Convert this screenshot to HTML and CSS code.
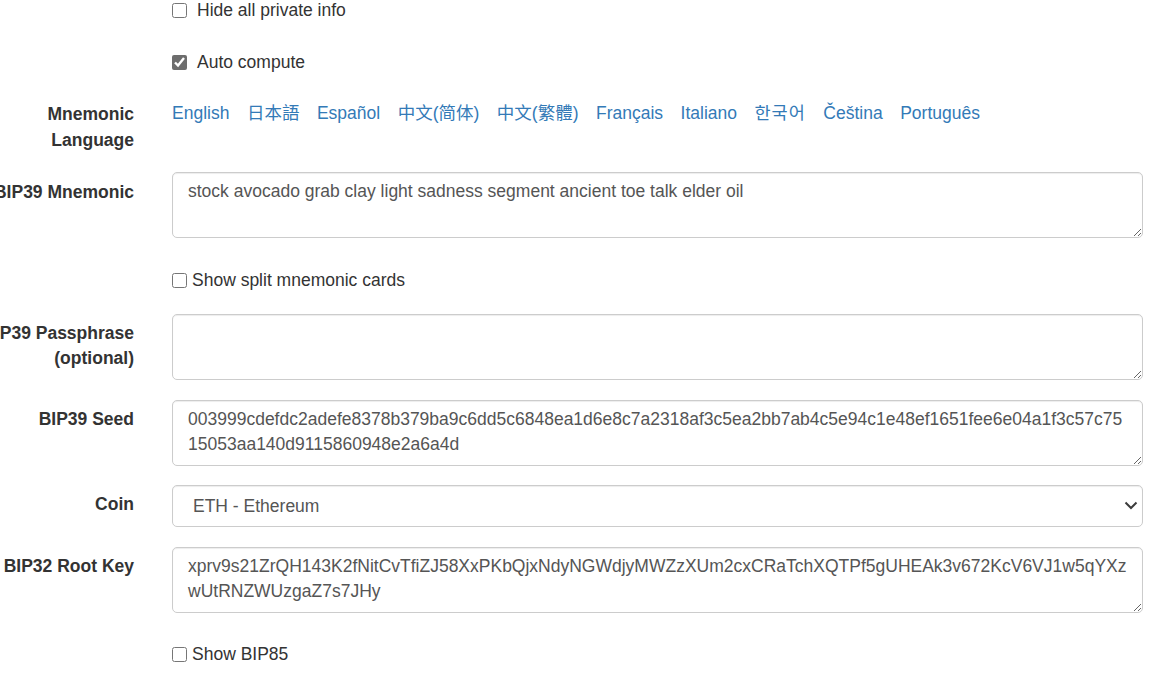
FILE: index.html
```html
<!DOCTYPE html>
<html lang="en">
<head>
<meta charset="utf-8">
<title>BIP39</title>
<link rel="stylesheet" href="styles.css">
</head>
<body>
<form class="form">
  <div class="row row-hide">
    <div class="label"></div>
    <div class="control">
      <label class="check check-wide"><input type="checkbox" class="cb"><span>Hide all private info</span></label>
    </div>
  </div>
  <div class="row row-auto">
    <div class="label"></div>
    <div class="control">
      <label class="check check-wide"><input type="checkbox" class="cb" checked><span>Auto compute</span></label>
    </div>
  </div>
  <div class="row row-lang">
    <div class="label label-flush">Mnemonic Language</div>
    <div class="control langs">
      <a href="#english">English</a>
      <a href="#japanese">日本語</a>
      <a href="#spanish">Español</a>
      <a href="#chinese_simplified">中文(简体)</a>
      <a href="#chinese_traditional">中文(繁體)</a>
      <a href="#french">Français</a>
      <a href="#italian">Italiano</a>
      <a href="#korean" class="ko">한국어</a>
      <a href="#czech">Čeština</a>
      <a href="#portuguese">Português</a>
    </div>
  </div>
  <div class="row row-mnemonic">
    <div class="label"><span class="nowrap">BIP39 Mnemonic</span></div>
    <div class="control">
      <textarea class="field" rows="2">stock avocado grab clay light sadness segment ancient toe talk elder oil</textarea>
    </div>
  </div>
  <div class="row row-split">
    <div class="label"></div>
    <div class="control">
      <label class="check"><input type="checkbox" class="cb"><span>Show split mnemonic cards</span></label>
    </div>
  </div>
  <div class="row row-pass">
    <div class="label">BIP39 Passphrase (optional)</div>
    <div class="control">
      <textarea class="field" rows="2"></textarea>
    </div>
  </div>
  <div class="row row-seed">
    <div class="label">BIP39 Seed</div>
    <div class="control">
      <textarea class="field" rows="2">003999cdefdc2adefe8378b379ba9c6dd5c6848ea1d6e8c7a2318af3c5ea2bb7ab4c5e94c1e48ef1651fee6e04a1f3c57c7515053aa140d9115860948e2a6a4d</textarea>
    </div>
  </div>
  <div class="row row-coin">
    <div class="label">Coin</div>
    <div class="control select-wrap">
      <select class="field select">
        <option>ETH - Ethereum</option>
      </select>
      <svg class="chevron" width="14" height="9" viewBox="0 0 14 9" aria-hidden="true"><path d="M1.5 1.5 L7 7 L12.5 1.5" fill="none" stroke="#3c3c3c" stroke-width="2"/></svg>
    </div>
  </div>
  <div class="row row-root">
    <div class="label"><span class="nowrap">BIP32 Root Key</span></div>
    <div class="control">
      <textarea class="field" rows="2">xprv9s21ZrQH143K2fNitCvTfiZJ58XxPKbQjxNdyNGWdjyMWZzXUm2cxCRaTchXQTPf5gUHEAk3v672KcV6VJ1w5qYXzwUtRNZWUzgaZ7s7JHy</textarea>
    </div>
  </div>
  <div class="row row-bip85">
    <div class="label"></div>
    <div class="control">
      <label class="check"><input type="checkbox" class="cb"><span>Show BIP85</span></label>
    </div>
  </div>
</form>
</body>
</html>
```
FILE: styles.css
```css
html, body {
  margin: 0;
  padding: 0;
  background: #fff;
  overflow: hidden;
}
body {
  font-family: "Liberation Sans", Arial, "Noto Sans CJK SC", sans-serif;
  font-size: 17.5px;
  line-height: 25px;
  color: #333;
}
.form {
  margin: -2px 17px 0 -26px;
}
.row {
  display: flex;
  gap: 38px;
  align-items: flex-start;
}
.label {
  flex: 0 0 160px;
  width: 160px;
  display: flex;
  justify-content: flex-end;
  text-align: right;
  font-weight: bold;
  color: #333;
  padding-top: 7px;
  box-sizing: border-box;
}
.label-flush {
  padding-top: 0;
  line-height: 26px;
}
.row-mnemonic .label {
  padding-top: 8px;
}
.nowrap {
  white-space: nowrap;
}
.control {
  flex: 0 0 971px;
  width: 971px;
  min-width: 0;
}

.row-hide { margin-bottom: 27px; }
.row-auto { margin-bottom: 26px; }
.row-lang { margin-bottom: 19px; }
.row-mnemonic { margin-bottom: 30px; }
.row-split { margin-bottom: 21px; }
.row-pass { margin-bottom: 20px; }
.row-seed { margin-bottom: 19px; }
.row-coin { margin-bottom: 20px; }
.row-root { margin-bottom: 29px; }

.check {
  display: flex;
  align-items: center;
  height: 25px;
  font-weight: normal;
  color: #333;
  cursor: pointer;
}
.cb {
  width: 15px;
  height: 15px;
  margin: 0 5px 0 0;
  accent-color: #6d6d6d;
  flex: 0 0 auto;
}
.check-wide .cb {
  margin-right: 10px;
}

.langs {
  display: flex;
  flex-wrap: wrap;
  column-gap: 17.5px;
}
.langs a {
  color: #337ab7;
  text-decoration: none;
  font-family: "Liberation Sans", Arial, "Noto Sans CJK SC", sans-serif;
}
.langs a.ko {
  font-family: "Liberation Sans", Arial, "Noto Sans CJK KR", sans-serif;
  letter-spacing: 1px;
}

.field {
  display: block;
  width: 100%;
  box-sizing: border-box;
  font-family: "Liberation Sans", Arial, sans-serif;
  font-size: 17.5px;
  line-height: 25px;
  color: #555;
  background: #fff;
  border: 1px solid #ccc;
  border-radius: 5px;
  box-shadow: inset 0 1px 1px rgba(0, 0, 0, 0.075);
  margin: 0;
  outline: none;
}
textarea.field {
  height: 66px;
  padding: 6px 15px 8px;
  resize: vertical;
  overflow: hidden;
}
.select-wrap {
  position: relative;
}
.select {
  height: 42px;
  padding: 0 40px 0 20px;
  -webkit-appearance: none;
  appearance: none;
}
.chevron {
  position: absolute;
  right: 5px;
  top: 16px;
  pointer-events: none;
}
```
